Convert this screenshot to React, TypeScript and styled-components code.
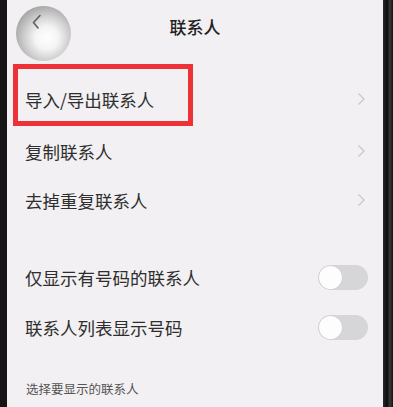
import React from 'react'
import styled, { createGlobalStyle } from 'styled-components'

const GlobalStyle = createGlobalStyle`
  html, body {
    margin: 0;
    padding: 0;
    background: #1c1c1e;
  }
  body {
    font-family: "Noto Sans CJK SC", "Noto Sans", sans-serif;
  }
`

const Frame = styled.div`
  width: 393px;
  height: 407px;
  display: flex;
  background: #151515;
  overflow: hidden;
`

const Screen = styled.div`
  margin-left: 7px;
  width: 376px;
  height: 100%;
  background: #f2f0f2;
  display: flex;
  flex-direction: column;
  position: relative;
`

const Bezel = styled.div`
  flex: 1;
  background: linear-gradient(90deg, #2a2a2a 0%, #0c0c0c 40%, #3a3a3a 70%, #111 100%);
`

const Header = styled.div`
  height: 52px;
  display: flex;
  align-items: center;
  justify-content: center;
  font-size: 17px;
  font-weight: 500;
  color: #222;
`

const FloatingBall = styled.div`
  position: absolute;
  left: 9px;
  top: 6px;
  width: 55px;
  height: 55px;
  border-radius: 50%;
  background: radial-gradient(circle at 56% 58%, #ffffff 0%, #f4f4f4 26%, #cfcfcf 50%, #9c9c9c 80%, #a8a8a8 100%);
`

const BallChevron = styled.svg`
  position: absolute;
  left: 15px;
  top: 8px;
`

const List = styled.div`
  display: flex;
  flex-direction: column;
  padding-top: 22px;
`

const Row = styled.div<{ $height: number }>`
  height: ${p => p.$height}px;
  display: flex;
  align-items: center;
  justify-content: space-between;
  padding: 0 17px 0 18px;
  font-size: 17.5px;
  color: #2e2e2e;
  position: relative;
`

const Highlight = styled.div`
  position: absolute;
  left: 6px;
  top: -10px;
  width: 170px;
  height: 52px;
  border: 5px solid #ec3237;
`

const Gap = styled.div`
  height: 30px;
`

const Toggle = styled.div`
  width: 50px;
  height: 25px;
  border-radius: 13px;
  background: #d6d5d7;
  position: relative;
  margin-right: -2px;
`

const Knob = styled.div`
  position: absolute;
  left: 1px;
  top: 1px;
  width: 23px;
  height: 23px;
  border-radius: 50%;
  background: #fdfdfd;
  box-shadow: 0 0 1px rgba(0, 0, 0, 0.15);
`

const SectionLabel = styled.div`
  padding: 27px 19px 0;
  font-size: 12.5px;
  color: #555;
`

const Chevron = () => (
  <svg width="9" height="14" viewBox="0 0 9 14">
    <path d="M1.5 1.5 L7 7 L1.5 12.5" fill="none" stroke="#cbc9cc" strokeWidth="1.4" />
  </svg>
)

export default function App() {
  return (
    <>
      <GlobalStyle />
      <Frame>
        <Screen>
          <FloatingBall>
            <BallChevron width="12" height="18" viewBox="0 0 12 18">
              <path d="M9 1.5 L2.5 8.5 L7 14" fill="none" stroke="#4a4a4a" strokeWidth="1.6" strokeLinecap="round" strokeLinejoin="round" opacity="0.85" />
            </BallChevron>
          </FloatingBall>
          <Header>联系人</Header>
          <List>
            <Row $height={50}>
              <Highlight />
              <span>导入/导出联系人</span>
              <Chevron />
            </Row>
            <Row $height={54}>
              <span>复制联系人</span>
              <Chevron />
            </Row>
            <Row $height={44}>
              <span>去掉重复联系人</span>
              <Chevron />
            </Row>
            <Gap />
            <Row $height={50}>
              <span>仅显示有号码的联系人</span>
              <Toggle><Knob /></Toggle>
            </Row>
            <Row $height={50}>
              <span>联系人列表显示号码</span>
              <Toggle><Knob /></Toggle>
            </Row>
          </List>
          <SectionLabel>选择要显示的联系人</SectionLabel>
        </Screen>
        <Bezel />
      </Frame>
    </>
  )
}
